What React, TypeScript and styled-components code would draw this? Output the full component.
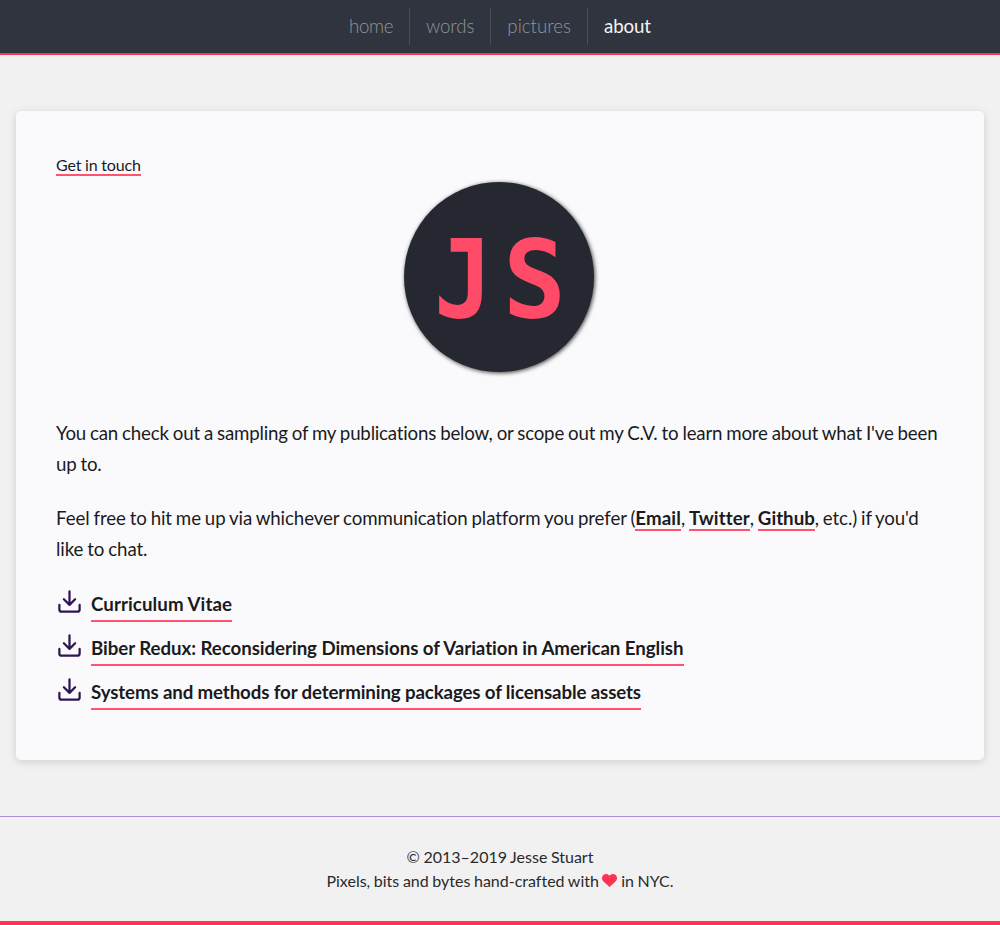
import React from "react";
import styled, { createGlobalStyle, css } from "styled-components";

const Global = createGlobalStyle`
  *, *::before, *::after { box-sizing: border-box; }
  body {
    margin: 0;
    background: #f1f1f1;
    color: #1b1b1e;
    font-family: Lato, "Open Sans", sans-serif;
    font-variant-ligatures: none;
  }
`;

const Page = styled.div`
  display: flex;
  flex-direction: column;
  height: 925px;
`;

const Header = styled.header`
  display: flex;
  justify-content: center;
  height: 55px;
  padding: 8px 0;
  background: #30343e;
  border-bottom: 2px solid #ff3355;
`;

const NavItem = styled.a<{ $active?: boolean; $tracking?: number }>`
  height: 37px;
  padding: 0 16px;
  font-size: 18.7px;
  line-height: 37px;
  letter-spacing: ${(p) => p.$tracking ?? -0.12}px;
  font-weight: 300;
  color: #92949a;
  text-decoration: none;
  & + & { border-left: 1px solid #4a4d56; }
  ${(p) =>
    p.$active &&
    css`
      font-weight: 400;
      color: #f4f4f6;
    `}
`;

const Card = styled.main`
  height: 649px;
  margin: 56px 16px;
  padding: 40px;
  background: #fafafc;
  border-radius: 5px;
  box-shadow: 0 2px 8px rgba(0, 0, 0, 0.14);
`;

const Tagline = styled.div`
  height: 31px;
  font-size: 16px;
  line-height: 27px;
  letter-spacing: -0.1px;
  word-spacing: -0.4px;
`;

const Link = styled.a<{ $bold?: boolean; $tracking?: number }>`
  color: inherit;
  text-decoration: none;
  font-weight: ${(p) => (p.$bold ? 700 : 400)};
  letter-spacing: ${(p) => (p.$tracking === undefined ? "inherit" : `${p.$tracking}px`)};
  border-bottom: 2px solid #ff5370;
`;

const Logo = styled.svg`
  display: block;
  width: 190px;
  height: 190px;
  margin: 0 auto 46px;
  border-radius: 50%;
  background: #252830;
  box-shadow: 1px 1px 4px rgba(0, 0, 0, 0.75);
  position: relative;
  left: -1px;
`;

const Paragraph = styled.p<{ $tracking: number; $wordGap: number }>`
  margin: 0 0 23px;
  font-size: 18.7px;
  line-height: 31px;
  letter-spacing: ${(p) => p.$tracking}px;
  word-spacing: ${(p) => p.$wordGap}px;
`;

const Downloads = styled.ul`
  display: grid;
  grid-auto-rows: 44px;
  margin: 0;
  padding: 0;
  list-style: none;
`;

const Download = styled.li`
  display: flex;
  align-items: flex-start;
  gap: 8px;
  font-size: 18.7px;
  line-height: 32px;
`;

const Icon = styled.svg`
  flex: none;
  width: 27px;
  height: 27px;
`;

const Footer = styled.footer`
  flex: 1;
  padding-top: 28px;
  border-top: 1px solid #ab90d9;
  border-bottom: 4px solid #ff3355;
  text-align: center;
  font-size: 16px;
  line-height: 24px;
  word-spacing: -0.5px;
  color: #2a2a2c;
`;

const Heart = styled.svg`
  width: 15px;
  height: 13px;
  margin: 0 1px 0 -1px;
  vertical-align: 0;
`;

const files = [
  { name: "Curriculum Vitae", tracking: 0.08 },
  { name: "Biber Redux: Reconsidering Dimensions of Variation in American English", tracking: -0.055 },
  { name: "Systems and methods for determining packages of licensable assets", tracking: -0.125 },
];

const DownloadIcon = () => (
  <Icon viewBox="0 0 24 24" fill="none" stroke="#2f1650" strokeWidth="2" strokeLinecap="round" strokeLinejoin="round">
    <path d="M21 15v4a2 2 0 0 1-2 2H5a2 2 0 0 1-2-2v-4M7 10l5 5 5-5M12 15V3" />
  </Icon>
);

export default function App() {
  return (
    <Page>
      <Global />
      <Header>
        <NavItem $tracking={-0.4}>home</NavItem>
        <NavItem>words</NavItem>
        <NavItem $tracking={0}>pictures</NavItem>
        <NavItem $active>about</NavItem>
      </Header>
      <Card>
        <Tagline><Link>Get in touch</Link></Tagline>
        <Logo viewBox="0 0 190 190">
          <g fill="#ff4a68" fontFamily="DejaVu Sans Mono" fontWeight="700" fontSize="108">
            <text transform="translate(30 135) scale(.9 1)">J</text>
            <text transform="translate(99 135) scale(.97 1)">S</text>
          </g>
        </Logo>
        <Paragraph $tracking={-0.2} $wordGap={-0.56}>
          You can check out a sampling of my publications below, or scope out my C.V. to learn more about what I've been up to.
        </Paragraph>
        <Paragraph $tracking={-0.09} $wordGap={-0.8}>
          Feel free to hit me up via whichever communication platform you prefer (<Link $bold $tracking={0.1}>Email</Link>, <Link $bold $tracking={0.1}>Twitter</Link>, <Link $bold $tracking={0}>Github</Link>, etc.) if you'd like to chat.
        </Paragraph>
        <Downloads>
          {files.map((file) => (
            <Download key={file.name}>
              <DownloadIcon />
              <Link $bold $tracking={file.tracking}>{file.name}</Link>
            </Download>
          ))}
        </Downloads>
      </Card>
      <Footer>
        <div>© 2013–2019 Jesse Stuart</div>
        <div>
          Pixels, bits and bytes hand-crafted with{" "}
          <Heart viewBox="0 0 15 13">
            <path fill="#ff3355" d="M7.5 13 1.2 7.2C-.4 5.600-.4 2.800 1.100 1.300 2.900-.5 5.800-.3 7.500 1.800 9.200-.3 12.100-.5 13.900 1.300 15.400 2.800 15.400 5.600 13.800 7.200Z" />
          </Heart>{" "}
          in NYC.
        </div>
      </Footer>
    </Page>
  );
}
